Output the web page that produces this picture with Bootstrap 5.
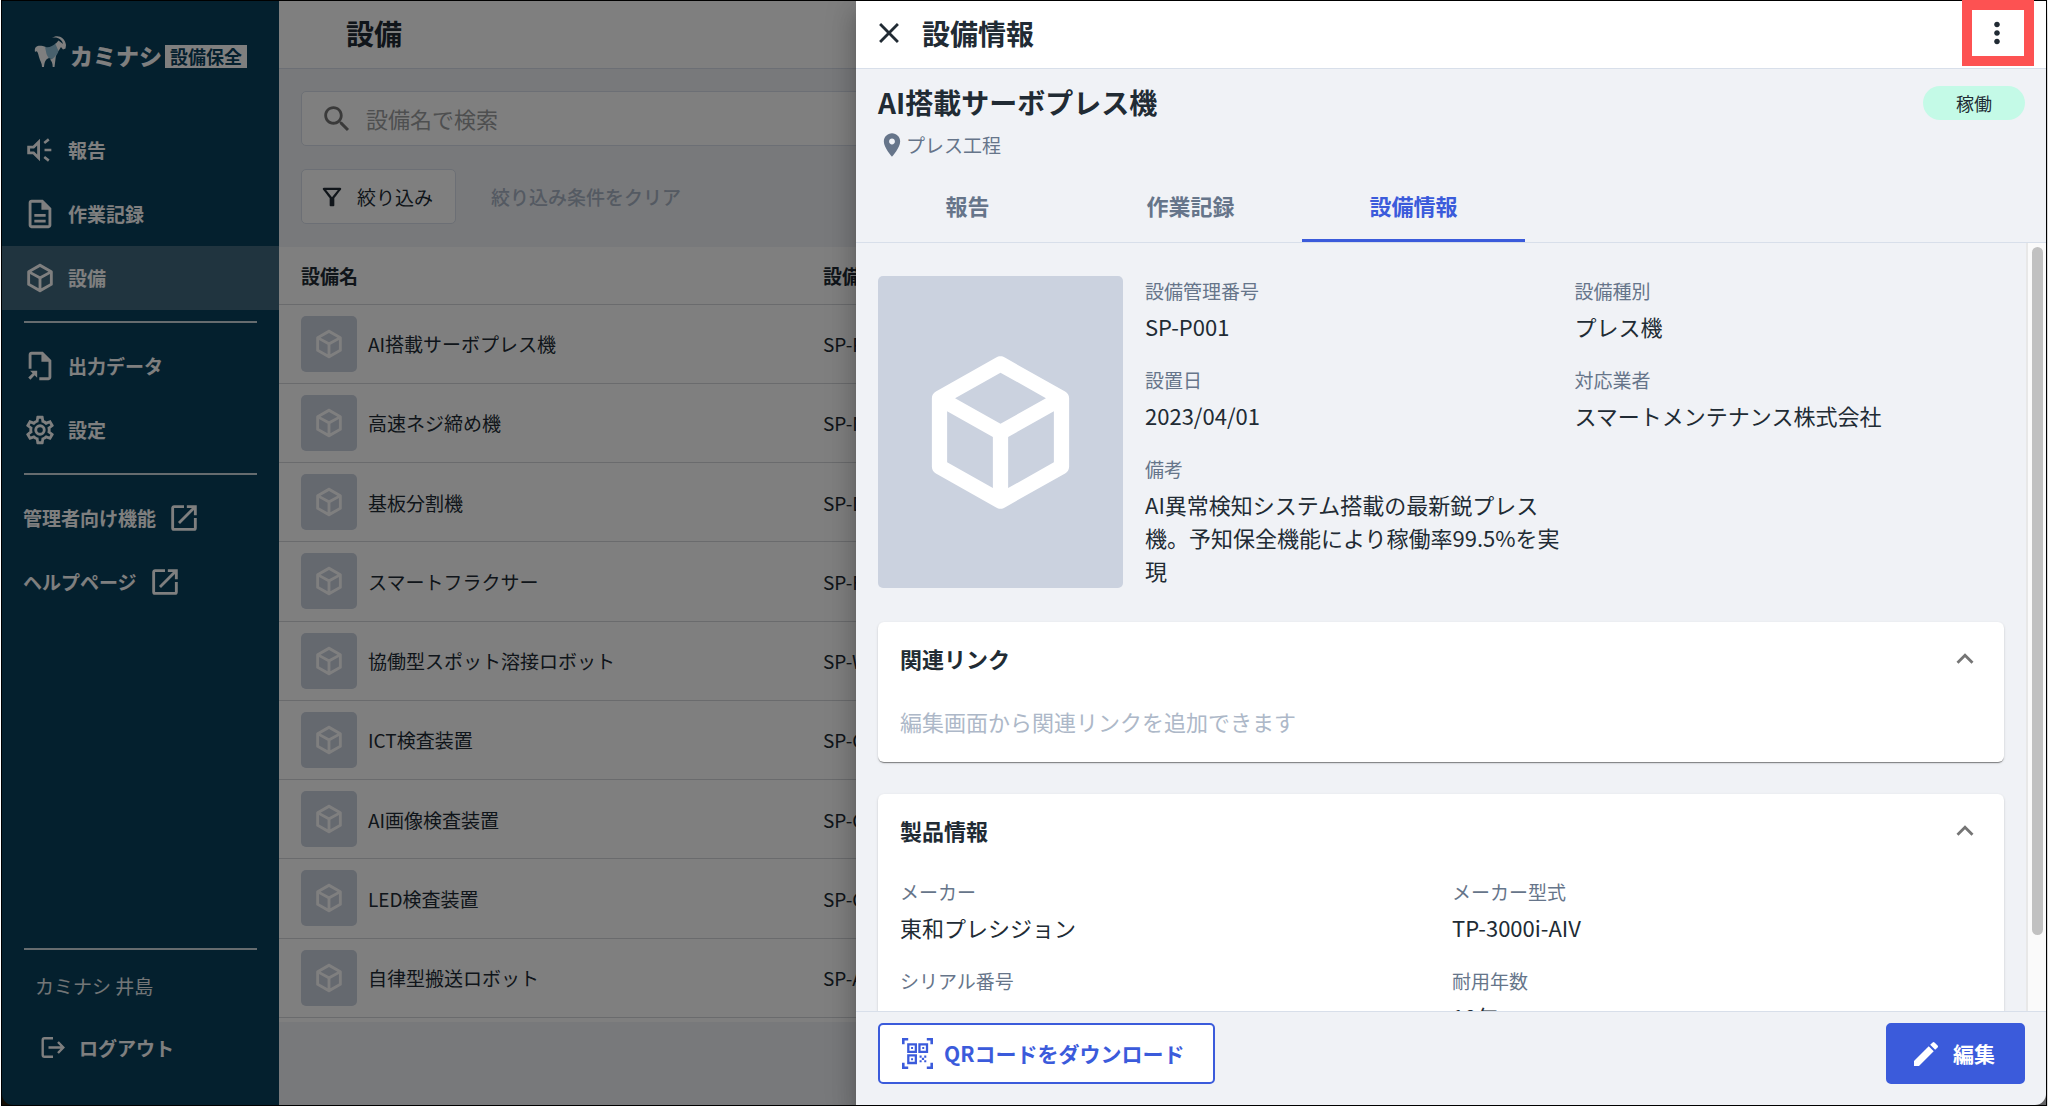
<!DOCTYPE html>
<html lang="ja">
<head>
<meta charset="utf-8">
<meta name="viewport" content="width=device-width, initial-scale=1">
<title>設備情報 | カミナシ 設備保全</title>
<link href="https://cdn.jsdelivr.net/npm/bootstrap@5.3.0/dist/css/bootstrap.min.css" rel="stylesheet">
<style>
  :root { --ink: #212b34; --slate: #66758a; --line: #d8dfea; --surface: #f0f2f6; --thumb: #cbd2df; --primary: #3b5bdb; }
  body { font-family: "Noto Sans CJK JP", "Noto Sans", sans-serif; font-size: 22px; line-height: 33px; color: var(--ink); background: #fff; }
  h1, h2, h3, dl, dt, dd, p { margin: 0; font-size: inherit; line-height: inherit; font-weight: inherit; }
  svg { display: block; flex: none; fill: currentColor; }
  .app-window { height: 100vh; margin: 0 1px; border: 1px solid #000; background: #241806; }
  .app-shell { border-radius: 0 0 11px 11px; }
  .t-sm { font-size: 19px; line-height: 29px; }
  .t-lg { font-size: 28px; line-height: 42px; font-weight: 700; }
  .slate { color: var(--slate); }
  .g-11 { gap: 11px; }
  .icon { width: 34px; height: 34px; }
  .icon-s { width: 28px; height: 28px; }

  .side { width: 277px; background: #08405c; color: #fff; padding-bottom: 43px; }
  .brand { padding: 32px 0 0 32px; height: 117px; }
  .brand-name { font-size: 23px; font-weight: 900; line-height: 23px; margin-top: 11px; }
  .brand-tag { font-size: 18px; font-weight: 700; line-height: 23px; background: #fff; color: #08405c; padding: 0 5px; margin: 12px 0 0 3px; }
  .side-link { height: 64px; padding: 0 0 1px 21px; font-size: 19px; font-weight: 700; color: #fff; text-decoration: none; }
  .side-link.on { background: #40687e; }
  .side-rule { height: 2px; margin: 11px 22px; background: #fff; opacity: .8; }
  .side-user { padding: 21px 0 0 33px; opacity: .9; }
  .side-exit { padding: 33px 0 0 38px; gap: 14px; border: 0; background: none; color: #fff; font-weight: 700; }

  .top-bar { height: 68px; border-bottom: 1px solid var(--line); background: #fff; padding-bottom: 4px; }
  .find-box { height: 55px; border: 1px solid var(--line); border-radius: 5px; background: #fff; padding-left: 18px; gap: 10px; }
  .find-box input { border: 0; outline: 0; background: none; color: var(--ink); width: 100%; }
  .find-box input::placeholder { color: #9c9ea0; opacity: 1; }
  .filter-btn { height: 55px; border: 1px solid var(--line); border-radius: 5px; background: #fff; color: var(--ink); padding: 0 22px 0 16px; gap: 11px; }
  .clear-btn { border: 0; background: none; color: #a9b4c5; font-weight: 500; }
  .table-wrap { background: #fff; padding-bottom: 4px; }
  .asset-table { height: 771px; margin: 0; color: var(--ink); table-layout: fixed; background: #fff; }
  .asset-table th, .asset-table td { padding: 0 0 0 22px; vertical-align: middle; border-bottom: 1px solid #d5d7da; background: #fff; color: var(--ink); box-shadow: none; }
  .asset-table th { height: 57px; font-weight: 700; }
  .asset-table .c-name { width: 522px; }
  .thumb-s { width: 56px; height: 56px; border-radius: 5px; background: var(--thumb); color: #fff; }

  .shade { inset: 0; background: rgba(0,0,0,.5); }
  .drawer { width: 1190px; max-width: 100%; background: var(--surface); box-shadow: 0 8px 10px -5px rgba(0,0,0,.2), 0 16px 24px 2px rgba(0,0,0,.14), 0 6px 30px 5px rgba(0,0,0,.12); }
  .plain-btn { border: 0; background: none; padding: 0; color: inherit; }
  .drawer-head { padding-left: 16px; padding-right: 32px; }
  .more-mark { top: -1px; right: 12px; width: 72px; height: 66px; border: 10px solid #fd5252; pointer-events: none; z-index: 2; }
  .asset-head { padding: 12px 21px 0 22px; }
  .state-pill { width: 102px; height: 34px; background: #c4fae7; font-size: 18px; line-height: 34px; margin-top: 5px; }
  .tab-row { border-bottom: 1px solid var(--line); margin-top: 16px; }
  .tab-btn { width: 223px; height: 67px; border: 0; border-bottom: 3px solid transparent; background: none; color: var(--slate); font-weight: 700; padding: 0 0 4px; }
  .tab-btn.on { color: var(--primary); border-color: var(--primary); }
  .scroll-body { min-height: 0; }
  .scroll-content { padding: 33px 22px 0; }
  .scroll-track { width: 20px; border-left: 2px solid #e8e8e8; background: #fafafa; padding: 4px 3px; }
  .scroll-thumb { width: 11px; height: 688px; border-radius: 6px; background: #c1c1c1; margin-left: 1px; }
  .photo { width: 245px; height: 312px; border-radius: 5px; background: var(--thumb); color: #fff; }
  .photo svg { width: 183px; height: 183px; }
  .facts { row-gap: 22px; }
  .facts dt { font-weight: 400; margin-bottom: 5px; }
  .panel { background: #fff; border-radius: 6px; box-shadow: 0 2px 1px -1px rgba(0,0,0,.3), 0 1px 1px 0 rgba(0,0,0,.18), 0 1px 3px 0 rgba(0,0,0,.12); }
  .panel-head { padding: 20px 22px 0; font-weight: 700; }
  .panel-head button { color: #757575; height: 33px; }
  .panel-body { padding: 30px 0 24px 22px; }
  .act-bar { padding: 11px 21px 21px 22px; border-top: 1px solid var(--line); }
  .act-btn { height: 61px; border-radius: 5px; font-size: 21px; font-weight: 700; border: 2px solid var(--primary); }
  .act-btn.ghost { background: #fff; color: var(--primary); padding: 0 28px 0 22px; }
  .act-btn.solid { background: var(--primary); color: #fff; padding: 0 28px 0 22px; }
</style>
<script src="https://cdn.jsdelivr.net/npm/bootstrap@5.3.0/dist/js/bootstrap.bundle.min.js"></script>
</head>
<body>
<svg width="0" height="0" class="position-absolute" aria-hidden="true">
  <symbol id="cube" viewBox="0 0 24 24"><path d="M21,16.5C21,16.88 20.79,17.21 20.47,17.38L12.57,21.82C12.41,21.94 12.21,22 12,22C11.79,22 11.59,21.94 11.43,21.82L3.53,17.38C3.21,17.21 3,16.88 3,16.5V7.5C3,7.12 3.21,6.79 3.53,6.62L11.43,2.18C11.59,2.06 11.79,2 12,2C12.21,2 12.41,2.06 12.57,2.18L20.47,6.62C20.79,6.79 21,7.12 21,7.5V16.5M12,4.15L6.04,7.5L12,10.85L17.96,7.5L12,4.15M5,15.91L11,19.29V12.58L5,9.21V15.91M19,15.91V9.21L13,12.58V19.29L19,15.91Z"/></symbol>
  <symbol id="ext" viewBox="0 0 24 24"><path d="M14,3V5H17.59L7.76,14.83L9.17,16.24L19,6.41V10H21V3M19,19H5V5H12V3H5C3.89,3 3,3.9 3,5V19A2,2 0 0,0 5,21H19A2,2 0 0,0 21,19V12H19V19Z"/></symbol>
  <symbol id="up" viewBox="0 0 24 24"><path d="M12 8l-6 6 1.41 1.41L12 10.83l4.59 4.58L18 14z"/></symbol>
</svg>

<div class="app-window">
<div class="app-shell position-relative d-flex h-100">

  <aside class="side d-flex flex-column flex-shrink-0" style="border-bottom-left-radius:11px">
    <div class="brand d-flex align-items-start">
      <svg width="36" height="36" viewBox="0 0 36 36" aria-hidden="true">
        <path fill="#fff" d="M2 14 C4 12 8 12.500 12 14 L15 25 C12 26 10.500 28 10 34 H8 C8 30 6 28 5 24 C4 20 3.500 17 1 19 C.5 16.500 1 15 2 14Z"/>
        <path fill="#93c3da" d="M11 14 C15 15 19 13 22 10 L25 16 C24 21 22 24 18 26 C15.500 26 13.500 24 12.500 21Z"/>
        <path fill="#fff" d="M16 26.500 C18.500 26 20.500 24.500 22 22 L20.500 34 H18.700 C18.700 30 17.500 28 16 26.500Z"/>
        <path fill="#fff" d="M18 5 C23 1 31 4 32 12 L31.500 15.500 L29 16.500 L27 14 L24.500 18 L21.500 11 L24.500 7.500 L29 11 C28 6.500 23 3.500 18 5Z"/>
      </svg>
      <span class="brand-name">カミナシ</span>
      <span class="brand-tag">設備保全</span>
    </div>
    <nav class="d-flex flex-column">
      <a href="#" class="side-link d-flex align-items-center g-11">
        <svg class="icon" viewBox="0 0 24 24"><path d="M3 9v6h4l5 5V4L7 9H3m7-.17v6.34L7.830 13H5v-2h2.830L10 8.830z"/><path fill="none" stroke="currentColor" stroke-width="1.800" d="M15 7l3.200-2.500M15.200 12H20M15 17l3.200 2.500"/></svg>報告</a>
      <a href="#" class="side-link d-flex align-items-center g-11">
        <svg class="icon" viewBox="0 0 24 24"><path d="M6 2C4.890 2 4 2.900 4 4v16c0 1.110.89 2 2 2h12c1.110 0 2-.89 2-2V8l-6-6H6m0 2h7v5h5v11H6V4m2 8v2h8v-2H8m0 4v2h8v-2H8z"/></svg>作業記録</a>
      <a href="#" class="side-link on d-flex align-items-center g-11" aria-current="page">
        <svg class="icon"><use href="#cube"/></svg>設備</a>
      <div class="side-rule"></div>
      <a href="#" class="side-link d-flex align-items-center g-11">
        <svg class="icon" viewBox="0 0 24 24"><path d="M4 14V4c0-1.100.9-2 2-2h8l6 6v12c0 1.100-.9 2-2 2h-6.500v-2H18V9h-5V4H6v10zM5 15.300h5v5L8.200 18.500 5.200 21.700 3.700 20.200 6.800 17.100z"/></svg>出力データ</a>
      <a href="#" class="side-link d-flex align-items-center g-11">
        <svg class="icon" viewBox="0 0 24 24"><path d="M12,8A4,4 0 0,1 16,12A4,4 0 0,1 12,16A4,4 0 0,1 8,12A4,4 0 0,1 12,8M12,10A2,2 0 0,0 10,12A2,2 0 0,0 12,14A2,2 0 0,0 14,12A2,2 0 0,0 12,10M10,22C9.75,22 9.54,21.82 9.5,21.58L9.13,18.93C8.5,18.68 7.96,18.34 7.44,17.94L4.95,18.95C4.73,19.03 4.46,18.95 4.34,18.73L2.34,15.27C2.21,15.05 2.27,14.78 2.46,14.63L4.57,12.97L4.5,12L4.57,11L2.46,9.37C2.27,9.22 2.21,8.95 2.34,8.73L4.34,5.27C4.46,5.05 4.73,4.96 4.95,5.05L7.44,6.05C7.96,5.66 8.5,5.32 9.13,5.07L9.5,2.42C9.54,2.18 9.75,2 10,2H14C14.25,2 14.46,2.18 14.5,2.42L14.87,5.07C15.5,5.32 16.04,5.66 16.56,6.05L19.05,5.05C19.27,4.96 19.54,5.05 19.66,5.27L21.66,8.73C21.79,8.95 21.73,9.22 21.54,9.37L19.43,11L19.5,12L19.43,13L21.54,14.63C21.73,14.78 21.79,15.05 21.66,15.27L19.66,18.73C19.54,18.95 19.27,19.04 19.05,18.95L16.56,17.95C16.04,18.34 15.5,18.68 14.87,18.93L14.5,21.58C14.46,21.82 14.25,22 14,22H10M11.25,4L10.88,6.61C9.68,6.86 8.62,7.5 7.85,8.39L5.44,7.35L4.69,8.65L6.8,10.2C6.4,11.37 6.4,12.64 6.8,13.8L4.68,15.36L5.43,16.66L7.86,15.62C8.63,16.5 9.68,17.14 10.87,17.38L11.24,20H12.76L13.13,17.39C14.32,17.14 15.37,16.5 16.14,15.62L18.57,16.66L19.32,15.36L17.2,13.81C17.6,12.64 17.6,11.37 17.2,10.2L19.31,8.65L18.56,7.35L16.15,8.39C15.38,7.5 14.32,6.86 13.12,6.62L12.75,4H11.25Z"/></svg>設定</a>
      <div class="side-rule"></div>
      <a href="#" class="side-link d-flex align-items-center g-11">管理者向け機能<svg class="icon"><use href="#ext"/></svg></a>
      <a href="#" class="side-link d-flex align-items-center g-11">ヘルプページ<svg class="icon"><use href="#ext"/></svg></a>
    </nav>
    <div class="mt-auto">
      <div class="side-rule mb-0"></div>
      <div class="side-user t-sm">カミナシ 井島</div>
      <button type="button" class="side-exit t-sm d-flex align-items-center">
        <svg width="25" height="25" viewBox="0 0 25 25" fill="none" stroke="currentColor" stroke-width="2.400"><path fill="none" d="M13 3.200H4.500Q2.700 3.200 2.700 5V20Q2.700 21.800 4.500 21.800H13M8.500 12.500H23M18 7l5.300 5.500L18 18"/></svg>ログアウト</button>
    </div>
  </aside>

  <main class="flex-grow-1 overflow-hidden" style="background:var(--surface)">
    <div class="top-bar d-flex align-items-center"><h1 class="t-lg" style="padding-left:67px">設備</h1></div>
    <div class="d-flex flex-column" style="padding:22px 22px 23px;gap:23px">
      <label class="find-box d-flex align-items-center">
        <svg class="icon" viewBox="0 0 24 24" style="color:#757575" aria-hidden="true"><path d="M15.500 14h-.79l-.28-.27C15.410 12.590 16 11.110 16 9.500 16 5.910 13.090 3 9.500 3S3 5.910 3 9.500 5.910 16 9.500 16c1.610 0 3.090-.59 4.230-1.570l.27.28v.79l5 4.990L20.490 19l-4.990-5zm-6 0C7.010 14 5 11.990 5 9.500S7.010 5 9.500 5 14 7.010 14 9.500 11.990 14 9.500 14z"/></svg>
        <input type="text" placeholder="設備名で検索" aria-label="設備名で検索">
      </label>
      <div class="d-flex align-items-center" style="gap:29px">
        <button type="button" class="filter-btn t-sm d-flex align-items-center">
          <svg class="icon-s" viewBox="0 0 24 24"><path d="M7 6h10l-5.010 6.300L7 6zm-2.750-.39C6.270 8.200 10 13 10 13v6c0 .55.45 1 1 1h2c.55 0 1-.45 1-1v-6s3.720-4.800 5.740-7.390c.51-.66.04-1.610-.79-1.610H5.040c-.83 0-1.300.95-.79 1.610z"/></svg>絞り込み</button>
        <button type="button" class="clear-btn t-sm">絞り込み条件をクリア</button>
      </div>
    </div>
    <div class="table-wrap">
    <table class="table asset-table t-sm">
      <thead><tr><th class="c-name" scope="col">設備名</th><th scope="col">設備管理番号</th></tr></thead>
      <tbody>
        <tr><td><div class="d-flex align-items-center g-11"><span class="thumb-s d-flex align-items-center justify-content-center"><svg class="icon"><use href="#cube"/></svg></span>AI搭載サーボプレス機</div></td><td>SP-P001</td></tr>
        <tr><td><div class="d-flex align-items-center g-11"><span class="thumb-s d-flex align-items-center justify-content-center"><svg class="icon"><use href="#cube"/></svg></span>高速ネジ締め機</div></td><td>SP-N001</td></tr>
        <tr><td><div class="d-flex align-items-center g-11"><span class="thumb-s d-flex align-items-center justify-content-center"><svg class="icon"><use href="#cube"/></svg></span>基板分割機</div></td><td>SP-D001</td></tr>
        <tr><td><div class="d-flex align-items-center g-11"><span class="thumb-s d-flex align-items-center justify-content-center"><svg class="icon"><use href="#cube"/></svg></span>スマートフラクサー</div></td><td>SP-F001</td></tr>
        <tr><td><div class="d-flex align-items-center g-11"><span class="thumb-s d-flex align-items-center justify-content-center"><svg class="icon"><use href="#cube"/></svg></span>協働型スポット溶接ロボット</div></td><td>SP-W001</td></tr>
        <tr><td><div class="d-flex align-items-center g-11"><span class="thumb-s d-flex align-items-center justify-content-center"><svg class="icon"><use href="#cube"/></svg></span>ICT検査装置</div></td><td>SP-C001</td></tr>
        <tr><td><div class="d-flex align-items-center g-11"><span class="thumb-s d-flex align-items-center justify-content-center"><svg class="icon"><use href="#cube"/></svg></span>AI画像検査装置</div></td><td>SP-C002</td></tr>
        <tr><td><div class="d-flex align-items-center g-11"><span class="thumb-s d-flex align-items-center justify-content-center"><svg class="icon"><use href="#cube"/></svg></span>LED検査装置</div></td><td>SP-C003</td></tr>
        <tr><td><div class="d-flex align-items-center g-11"><span class="thumb-s d-flex align-items-center justify-content-center"><svg class="icon"><use href="#cube"/></svg></span>自律型搬送ロボット</div></td><td>SP-A001</td></tr>
      </tbody>
    </table>
    </div>
  </main>

  <div class="shade position-absolute"></div>

  <section class="drawer position-absolute top-0 end-0 bottom-0 d-flex flex-column" style="border-bottom-right-radius:11px" role="dialog" aria-labelledby="drawerTitle">
    <header class="top-bar drawer-head d-flex align-items-center flex-shrink-0">
      <button type="button" class="plain-btn" aria-label="閉じる"><svg class="icon" viewBox="0 0 24 24"><path d="M19 6.410L17.590 5 12 10.590 6.410 5 5 6.410 10.590 12 5 17.590 6.410 19 12 13.410 17.590 19 19 17.590 13.410 12z"/></svg></button>
      <h2 id="drawerTitle" class="t-lg" style="margin-left:16px">設備情報</h2>
      <button type="button" class="plain-btn ms-auto" aria-label="メニュー"><svg class="icon" viewBox="0 0 24 24"><path d="M12 8c1.100 0 2-.9 2-2s-.9-2-2-2-2 .9-2 2 .9 2 2 2zm0 2c-1.100 0-2 .9-2 2s.9 2 2 2 2-.9 2-2-.9-2-2-2zm0 6c-1.100 0-2 .9-2 2s.9 2 2 2 2-.9 2-2-.9-2-2-2z"/></svg></button>
    </header>

    <div class="asset-head d-flex justify-content-between">
      <div>
        <h3 class="t-lg">AI搭載サーボプレス機</h3>
        <div class="d-flex align-items-center slate t-sm" style="margin-top:7px">
          <svg class="icon-s" viewBox="0 0 24 24"><path d="M12 2C8.130 2 5 5.130 5 9c0 5.250 7 13 7 13s7-7.750 7-13c0-3.870-3.130-7-7-7zm0 9.500c-1.380 0-2.500-1.120-2.500-2.500s1.120-2.500 2.500-2.500 2.500 1.120 2.500 2.500-1.120 2.500-2.500 2.500z"/></svg>プレス工程</div>
      </div>
      <span class="state-pill rounded-pill text-center">稼働</span>
    </div>

    <div class="tab-row d-flex flex-shrink-0" role="tablist">
      <button type="button" class="tab-btn" role="tab">報告</button>
      <button type="button" class="tab-btn" role="tab">作業記録</button>
      <button type="button" class="tab-btn on" role="tab" aria-selected="true">設備情報</button>
    </div>

    <div class="scroll-body d-flex flex-grow-1 overflow-hidden">
      <div class="scroll-content flex-grow-1">
        <div class="d-flex" style="gap:22px">
          <div class="photo d-flex align-items-center justify-content-center flex-shrink-0"><svg><use href="#cube"/></svg></div>
          <dl class="facts row g-0 flex-grow-1 align-content-start">
            <div class="col-6"><dt class="t-sm slate">設備管理番号</dt><dd>SP-P001</dd></div>
            <div class="col-6"><dt class="t-sm slate">設備種別</dt><dd>プレス機</dd></div>
            <div class="col-6"><dt class="t-sm slate">設置日</dt><dd>2023/04/01</dd></div>
            <div class="col-6"><dt class="t-sm slate">対応業者</dt><dd>スマートメンテナンス株式会社</dd></div>
            <div class="col-6"><dt class="t-sm slate">備考</dt><dd>AI異常検知システム搭載の最新鋭プレス機。予知保全機能により稼働率99.5%を実現</dd></div>
          </dl>
        </div>

        <section class="panel" style="margin-top:34px">
          <div class="panel-head d-flex justify-content-between"><h3>関連リンク</h3><button type="button" class="plain-btn" aria-label="折りたたむ"><svg class="icon"><use href="#up"/></svg></button></div>
          <p class="panel-body" style="color:#adb8c8">編集画面から関連リンクを追加できます</p>
        </section>

        <section class="panel" style="margin-top:32px">
          <div class="panel-head d-flex justify-content-between"><h3>製品情報</h3><button type="button" class="plain-btn" aria-label="折りたたむ"><svg class="icon"><use href="#up"/></svg></button></div>
          <dl class="panel-body facts row g-0">
            <div class="col-6"><dt class="t-sm slate">メーカー</dt><dd>東和プレシジョン</dd></div>
            <div class="col-6"><dt class="t-sm slate">メーカー型式</dt><dd>TP-3000i-AIV</dd></div>
            <div class="col-6"><dt class="t-sm slate">シリアル番号</dt></div>
            <div class="col-6"><dt class="t-sm slate">耐用年数</dt><dd>10年</dd></div>
          </dl>
        </section>
      </div>
      <div class="scroll-track flex-shrink-0"><div class="scroll-thumb"></div></div>
    </div>

    <footer class="act-bar d-flex justify-content-between flex-shrink-0">
      <button type="button" class="act-btn ghost d-flex align-items-center g-11">
        <svg width="31" height="31" viewBox="0 0 30 30"><path d="M0 0h6v2.500H2.500V6H0zM24 0h6v6h-2.500V2.500H24zM0 24h2.500v3.500H6V30H0zM27.500 24H30v6h-6v-2.500h3.500z"/><path fill-rule="evenodd" d="M5 5h9.500v9.500H5zM7.200 7.200v5.100h5.100V7.200zM8.800 8.800h1.900v1.900H8.800zM15.800 5h9.500v9.500h-9.500zM18 7.200v5.100h5.100V7.200zM19.600 8.800h1.900v1.900h-1.900zM5 15.800h9.500v9.500H5zM7.200 18v5.100h5.100V18zM8.800 19.600h1.900v1.900H8.800z"/><path d="M17 17h2v2h-2zM21.500 17h2v2h-2zM19.200 19.200h2.200v2.200h-2.200zM17 21.500h2v2h-2zM21.500 21.500h2v2h-2z"/></svg>QRコードをダウンロード</button>
      <button type="button" class="act-btn solid d-flex align-items-center g-11">
        <svg width="32" height="32" viewBox="0 0 24 24"><path d="M3 17.250V21h3.750L17.810 9.940l-3.750-3.750L3 17.250zM20.710 7.040a1 1 0 000-1.410l-2.340-2.340a1 1 0 00-1.410 0l-1.830 1.830 3.750 3.750z"/></svg>編集</button>
    </footer>
    <div class="more-mark position-absolute"></div>
  </section>
</div>
</div>
</body>
</html>
